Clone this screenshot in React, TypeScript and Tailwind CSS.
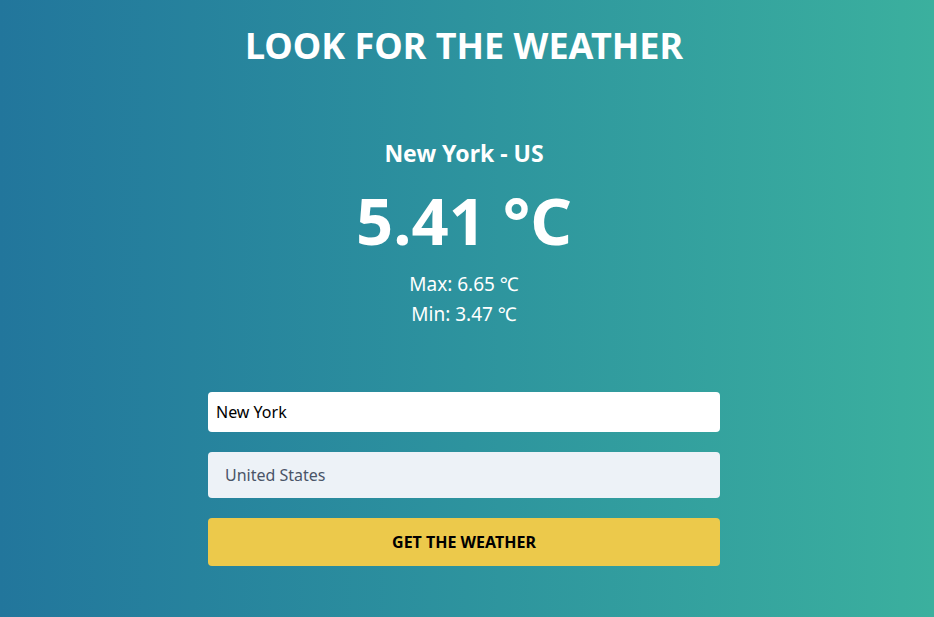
import React from "react";

export default function App() {
  return (
    <div
      className="w-[934px] h-[617px] bg-gradient-to-r from-[#22769c] to-[#3bb09e] text-white flex flex-col items-center pr-[6px]"
      style={{ fontFamily: '"Noto Sans", "Open Sans", sans-serif' }}
    >
      <h1 className="mt-[24px] text-[36px] leading-[44px] font-bold">LOOK FOR THE WEATHER</h1>
      <div className="mt-[71px] flex flex-col items-center">
        <div className="text-[23px] leading-[28px] font-bold">New York - US</div>
        <div className="mt-[19px] text-[65px] leading-[68px] font-bold">5.41 °C</div>
        <div className="mt-[15px] text-[19px] leading-[30px]">Max: 6.65 ℃</div>
        <div className="text-[19px] leading-[30px]">Min: 3.47 ℃</div>
      </div>
      <div className="mt-[63px] w-[512px] flex flex-col">
        <input
          defaultValue="New York"
          className="h-[40px] bg-white rounded-[4px] px-[8px] text-[16px] text-black outline-none"
        />
        <input
          placeholder="United States"
          className="mt-[20px] h-[46px] bg-[#edf2f7] rounded-[4px] px-[17px] text-[16px] text-black placeholder:text-[#4a5568] outline-none"
        />
        <button className="mt-[20px] h-[48px] bg-[#ecc94b] rounded-[4px] text-[16px] font-bold text-black">
          GET THE WEATHER
        </button>
      </div>
    </div>
  );
}
